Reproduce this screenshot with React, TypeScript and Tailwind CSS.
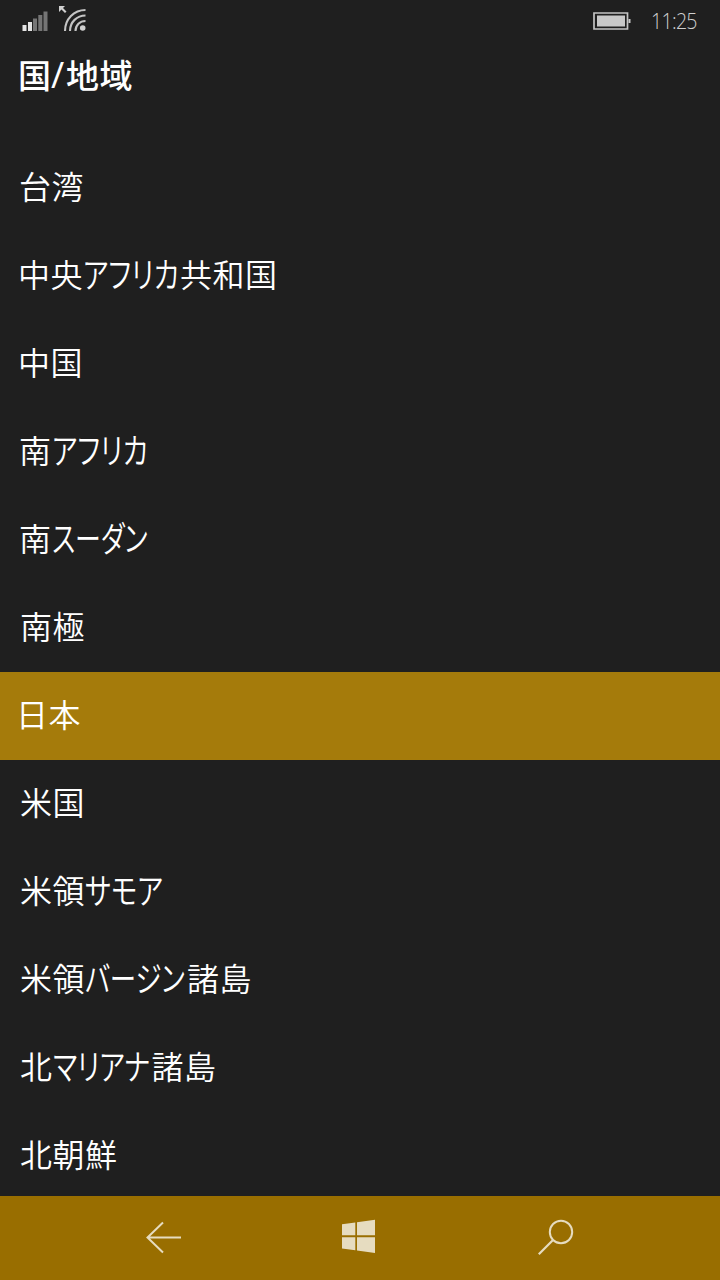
import { useState } from "react";

type Part = {
  text: string;
  // narrow katakana run: box width + squeeze
  kana?: string;
};

type Region = {
  id: string;
  parts: Part[];
  offset?: string;
};

const regions: Region[] = [
  { id: "tw", offset: "-ml-px", parts: [{ text: "台湾" }] },
  {
    id: "cf",
    offset: "-ml-0.5",
    parts: [{ text: "中央" }, { text: "アフリカ", kana: "w-[97px] scale-x-[0.78]" }, { text: "共和国" }],
  },
  { id: "cn", offset: "-ml-0.5", parts: [{ text: "中国" }] },
  { id: "za", offset: "-ml-px", parts: [{ text: "南" }, { text: "アフリカ", kana: "w-[98px] scale-x-[0.78]" }] },
  { id: "ss", offset: "-ml-px", parts: [{ text: "南" }, { text: "スーダン", kana: "w-[98px] scale-x-[0.74]" }] },
  { id: "aq", parts: [{ text: "南極" }] },
  { id: "jp", offset: "-ml-1", parts: [{ text: "日本" }] },
  { id: "us", parts: [{ text: "米国" }] },
  { id: "as", parts: [{ text: "米領" }, { text: "サモア", kana: "w-[78px] scale-x-[0.79]" }] },
  {
    id: "vi",
    parts: [{ text: "米領" }, { text: "バージン", kana: "w-[102px] scale-x-[0.755]" }, { text: "諸島" }],
  },
  {
    id: "mp",
    parts: [{ text: "北" }, { text: "マリアナ", kana: "w-[99px] scale-x-[0.775]" }, { text: "諸島" }],
  },
  { id: "kp", parts: [{ text: "北朝鮮" }] },
];

function StatusBar() {
  return (
    <div className="flex h-[42px] shrink-0 items-start justify-between pr-[22px] pl-[22px]">
      <div className="flex">
        <svg width="26" height="42" viewBox="0 0 26 42">
          <path d="M0.500 25h4v6h-4zM6 22h4v9H6z" fill="#e4e4e4" />
          <path d="M11 18.500h4V31h-4zM16.300 15h4v16h-4zM21.500 11.500h4V31h-4z" fill="#757575" />
        </svg>
        <svg className="ml-[10px]" width="30" height="42" viewBox="0 0 30 42" fill="none" stroke="#c4c4c4">
          <path d="M1 6h6L5 8l3.500 3.500-1.500 1.500L3.500 9.500 1 12z" fill="#d0d0d0" stroke="none" />
          <path d="M7 31C7 19 16 10 27.500 10M12 31C12 22 19 15.500 27.500 15.500M17.500 31C17.500 25 22 21 27.500 21" strokeWidth="2.100" />
          <circle cx="24.700" cy="28" r="2.800" fill="#d0d0d0" stroke="none" />
        </svg>
      </div>
      <div className="flex">
        <svg width="40" height="42" viewBox="0 0 40 42">
          <path d="M2 13h33.500v16H2z" fill="none" stroke="#c4c4c4" strokeWidth="1.700" />
          <path d="M5 15.500h28v11H5z" fill="#c8c8c8" />
          <path d="M36.500 19h2v4h-2z" fill="#c8c8c8" />
        </svg>
        <span className="ml-[19px] w-[47px] origin-left scale-x-[0.89] font-['Open_Sans',sans-serif] text-[22px] leading-[41px] font-light tracking-[-0.8px] whitespace-nowrap text-[#cfcfcf]">
          11:25
        </span>
      </div>
    </div>
  );
}

function NavBar() {
  return (
    <nav className="flex h-[84px] shrink-0 items-center bg-[#996e00] pl-[145px] text-[#e6dcc0]">
      <button aria-label="戻る">
        <svg width="37" height="84" viewBox="0 0 37 84" fill="none" stroke="currentColor" strokeWidth="2">
          <path d="M36 41.500H2.500M18 26.500l-15.500 15 15.500 15" />
        </svg>
      </button>
      <button className="ml-[159px]" aria-label="スタート">
        <svg width="34" height="84" viewBox="0 0 34 84" fill="currentColor">
          <path d="M1 28.300L14.300 26.500V39.200H1zM16 26.200L34 23.800V39.200H16zM1 41.300H14.300V54.300L1 52.500zM16 41.300H34V57L16 54.600z" />
        </svg>
      </button>
      <button className="ml-[163px]" aria-label="検索">
        <svg width="37" height="84" viewBox="0 0 37 84" fill="none" stroke="currentColor" strokeWidth="2">
          <circle cx="23" cy="36" r="11.200" />
          <path d="M15 44L0.800 58.200" strokeWidth="2.200" />
        </svg>
      </button>
    </nav>
  );
}

export default function App() {
  const [selected, setSelected] = useState("jp");

  return (
    <div className="flex h-[1280px] w-[720px] flex-col overflow-hidden bg-[#1f1f1f] font-['Noto_Sans_CJK_JP',sans-serif] text-white">
      <StatusBar />
      <h1 className="flex h-[102px] shrink-0 pl-[18px] text-[33px] leading-[65px] font-medium">
        <span>国</span>
        <span className="w-[15px] font-['Open_Sans',sans-serif] text-[36px] font-medium">/</span>
        <span className="tracking-[0.5px]">地域</span>
      </h1>

      <ul className="min-h-0 flex-1 overflow-hidden">
        {regions.map((region) => (
          <li
            key={region.id}
            onClick={() => setSelected(region.id)}
            className={`flex h-[88px] items-start pl-5 ${region.id === selected ? "bg-[#a57b0b]" : ""}`}
          >
            <div
              className={`flex text-[32px] leading-[83px] font-[350] tracking-[0.5px] whitespace-nowrap ${region.offset ?? ""}`}
            >
              {region.parts.map((part) => (
                <span
                  key={part.text}
                  className={
                    part.kana
                      ? `block origin-left text-[35px] leading-[81px] tracking-normal [font-feature-settings:'palt'] ${part.kana}`
                      : "block"
                  }
                >
                  {part.text}
                </span>
              ))}
            </div>
          </li>
        ))}
      </ul>

      <NavBar />
    </div>
  );
}
